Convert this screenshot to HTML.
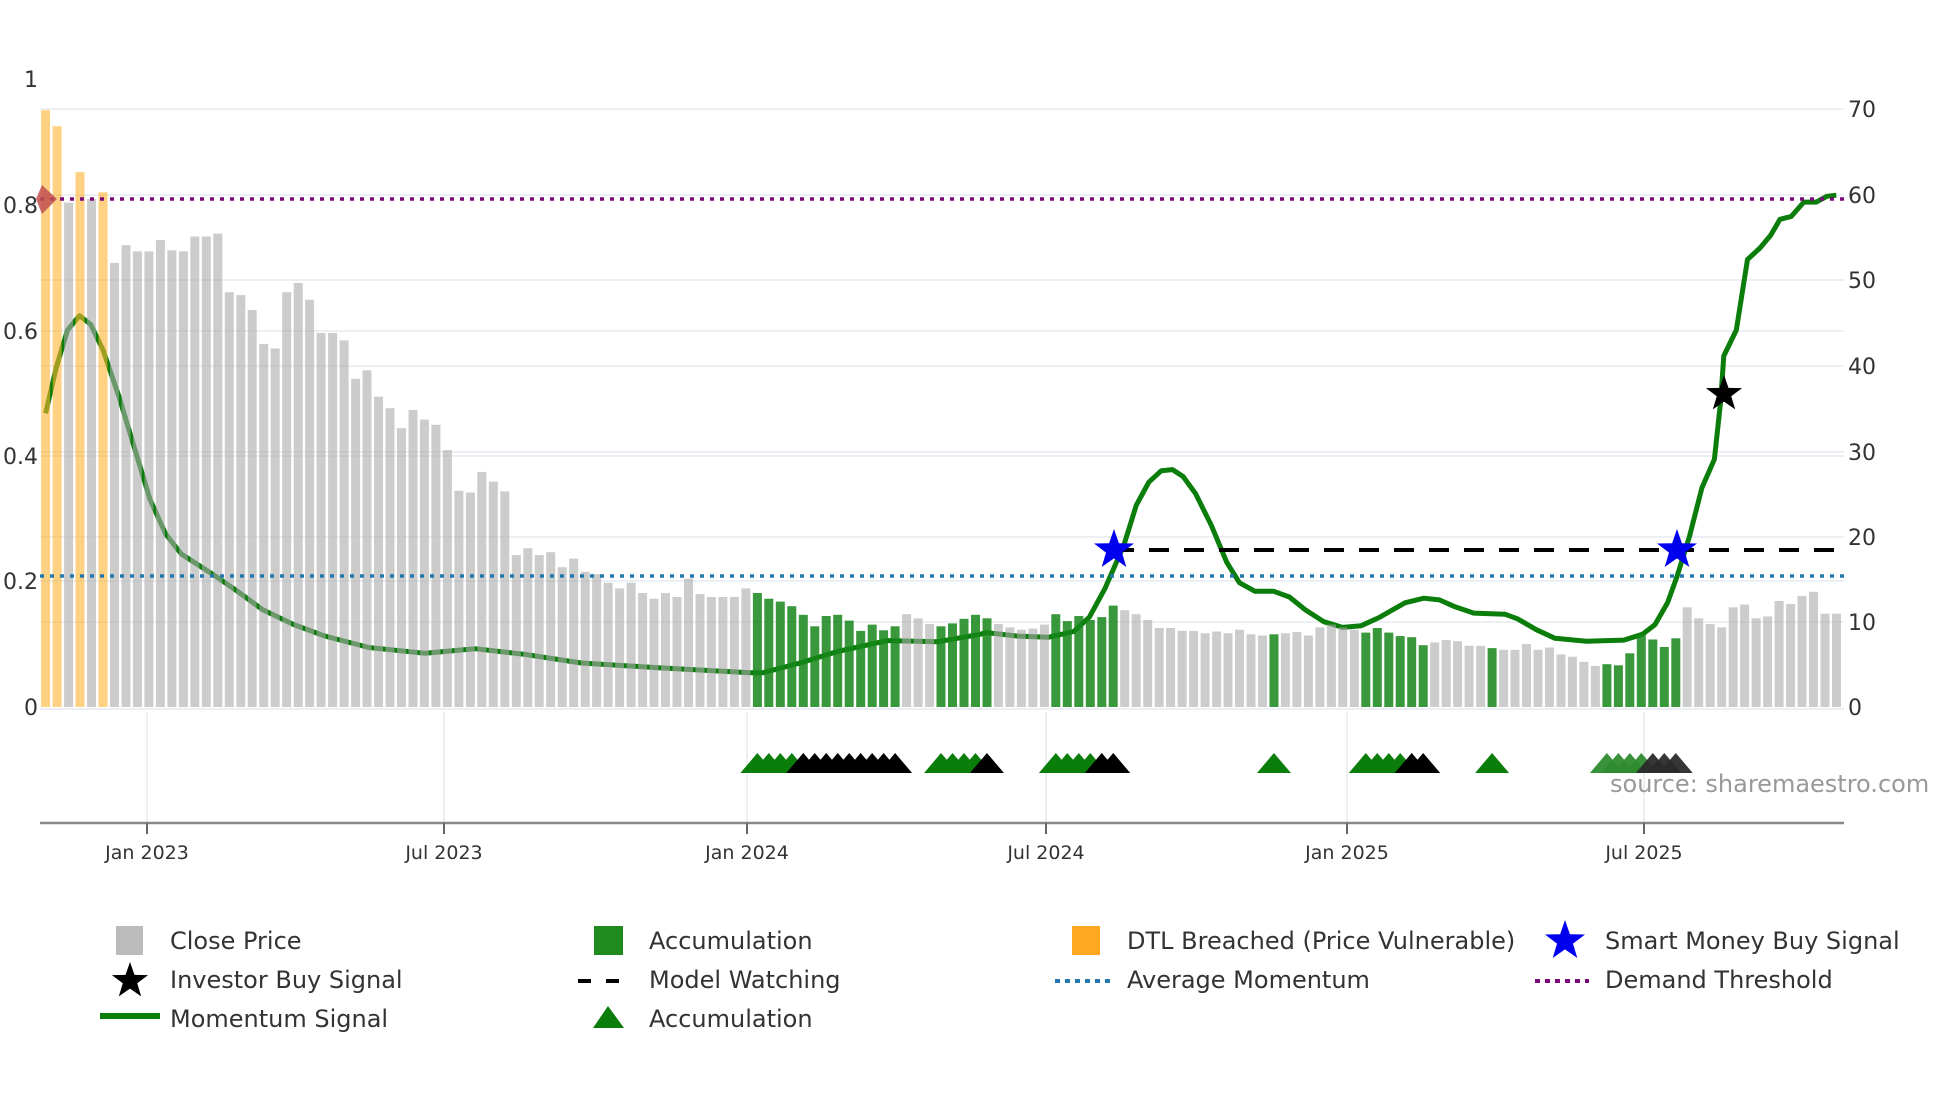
<!DOCTYPE html>
<html><head><meta charset="utf-8">
<style>
html,body{margin:0;padding:0;background:#fff;width:1960px;height:1102px;overflow:hidden}
svg{display:block}
text{font-family:"DejaVu Sans","Liberation Sans",sans-serif;fill:#333}
</style></head>
<body>
<svg id="s" width="1960" height="1102" viewBox="0 0 1960 1102" xmlns="http://www.w3.org/2000/svg">
<g id="grid" stroke="#eceff3" stroke-width="2">
<line x1="40" x2="1844" y1="109" y2="109"/>
<line x1="40" x2="1844" y1="195" y2="195"/>
<line x1="40" x2="1844" y1="280" y2="280"/>
<line x1="40" x2="1844" y1="331" y2="331"/>
<line x1="40" x2="1844" y1="366" y2="366"/>
<line x1="40" x2="1844" y1="452" y2="452"/>
<line x1="40" x2="1844" y1="456" y2="456"/>
<line x1="40" x2="1844" y1="537" y2="537"/>
<line x1="40" x2="1844" y1="581" y2="581"/>
<line x1="40" x2="1844" y1="622" y2="622"/>
<line x1="40" x2="1844" y1="709" y2="709"/>
<line x1="147" x2="147" y1="712" y2="823"/>
<line x1="444" x2="444" y1="712" y2="823"/>
<line x1="747" x2="747" y1="712" y2="823"/>
<line x1="1046" x2="1046" y1="712" y2="823"/>
<line x1="1347" x2="1347" y1="712" y2="823"/>
<line x1="1644" x2="1644" y1="712" y2="823"/>
</g>
<polyline id="mom" fill="none" stroke="#0a7d0a" stroke-width="5" stroke-linejoin="round"/>
<g id="bars"></g>
<line x1="40" x2="1844" y1="199" y2="199" stroke="#7a0a7a" stroke-width="3.5" stroke-dasharray="4,6"/>
<line x1="40" x2="1844" y1="576" y2="576" stroke="#2577b0" stroke-width="3.5" stroke-dasharray="4,6"/>
<line x1="1114" x2="1840" y1="550" y2="550" stroke="#000" stroke-width="4" stroke-dasharray="20,15"/>
<polygon points="42,185 57,199 42,214 36,199" fill="#c0504d" opacity="0.85"/>
<g id="tris"></g>
<g id="stars"></g>
<line x1="40" x2="1844" y1="823" y2="823" stroke="#888" stroke-width="2.5"/>
<g stroke="#666" stroke-width="2">
<line x1="147" x2="147" y1="823" y2="834"/><line x1="444" x2="444" y1="823" y2="834"/>
<line x1="747" x2="747" y1="823" y2="834"/><line x1="1046" x2="1046" y1="823" y2="834"/>
<line x1="1347" x2="1347" y1="823" y2="834"/><line x1="1644" x2="1644" y1="823" y2="834"/>
</g>
<g font-size="19" text-anchor="middle">
<text x="147" y="859">Jan 2023</text><text x="444" y="859">Jul 2023</text>
<text x="747" y="859">Jan 2024</text><text x="1046" y="859">Jul 2024</text>
<text x="1347" y="859">Jan 2025</text><text x="1644" y="859">Jul 2025</text>
</g>
<g font-size="22" text-anchor="end">
<text x="38" y="87">1</text><text x="38" y="213">0.8</text><text x="38" y="339">0.6</text>
<text x="38" y="464">0.4</text><text x="38" y="589">0.2</text><text x="38" y="715">0</text>
</g>
<g font-size="22">
<text x="1848" y="117">70</text><text x="1848" y="203">60</text><text x="1848" y="288">50</text>
<text x="1848" y="374">40</text><text x="1848" y="460">30</text><text x="1848" y="545">20</text>
<text x="1848" y="630">10</text><text x="1848" y="715">0</text>
</g>
<text x="1610" y="792" font-size="24" style="fill:#999">source: sharemaestro.com</text>
<!-- legend -->
<g font-size="24">
<rect x="116" y="926" width="27" height="29" fill="#bbb"/>
<text x="170" y="949">Close Price</text>
<text x="170" y="988">Investor Buy Signal</text>
<line x1="100" x2="160" y1="1016" y2="1016" stroke="#0a7d0a" stroke-width="6"/>
<text x="170" y="1027">Momentum Signal</text>
<rect x="594" y="926" width="29" height="29" fill="#1f8b1f"/>
<text x="649" y="949">Accumulation</text>
<line x1="578" x2="632" y1="981" y2="981" stroke="#000" stroke-width="4" stroke-dasharray="13,15"/>
<text x="649" y="988">Model Watching</text>
<polygon points="593,1028 608,1006 624,1028" fill="#0a7d0a"/>
<text x="649" y="1027">Accumulation</text>
<rect x="1072" y="926" width="28" height="29" fill="#ffa81f"/>
<text x="1127" y="949">DTL Breached (Price Vulnerable)</text>
<line x1="1055" x2="1110" y1="981" y2="981" stroke="#2577b0" stroke-width="4" stroke-dasharray="5,5"/>
<text x="1127" y="988">Average Momentum</text>
<line x1="1535" x2="1589" y1="981" y2="981" stroke="#7a0a7a" stroke-width="4" stroke-dasharray="5,5"/>
<text x="1605" y="949">Smart Money Buy Signal</text>
<text x="1605" y="988">Demand Threshold</text>
</g>
<g id="lstars"></g>
</svg>
<script>
var NS="http://www.w3.org/2000/svg";
function el(t,a,p){var e=document.createElementNS(NS,t);for(var k in a)e.setAttribute(k,a[k]);document.getElementById(p).appendChild(e);return e;}
var top1=[192,220,353,300,347,335,458,427,438,438,418,436,438,412,412,407,509,514,540,599,607,509,493,522,580,580,593,660,645,691,711,746,714,731,740,784,855,858,822,839,856,967,955,967,962,988,973,996,1000,1015,1025,1015,1033,1043,1033,1040,1008,1035,1040,1040,1040,1025,
1033,1043,1048,1056,1071,1091,1073,1071,1081,1099,1088,1098,1091,1070,1077,1087,1091,1086,1078,1071,
1077,1087,1093,1097,1095,1088,1070,1082,1073,1080,1075,1055,
1063,1070,1080,1094,1094,1099,1099,1103,1100,1103,1097,1105,1107,1105,
1103,1101,1107,1093,1088,1093,1097,1102,1094,1102,1108,1110,1124,
1119,1115,1117,1125,1125,1129,1132,1132,1122,1132,1128,1140,1144,1153,1160,
1157,1159,1138,1105,1114,1127,1112,
1058,1077,1087,1093,1058,1053,1077,1074,1047,1052,1038,1031,1069,1069];
var green=[];function rg(a,b){for(var i=a;i<=b;i++)green[i]=1;}
rg(62,74);rg(78,82);rg(88,93);green[107]=1;rg(115,120);green[126]=1;rg(136,142);
var orange={0:1,1:1,3:1,5:1};
for(var i=0;i<157;i++){var cx=45.6+i*11.48;var t=top1[i]/1.742;
 var c,op;
 if(orange[i]){c="#ffb22e";op=0.6;}else if(green[i]){c="#16861a";op=0.85;}else{c="#aaaaaa";op=0.6;}
 el("rect",{x:(cx-4.5).toFixed(1),y:t.toFixed(1),width:9,height:(707-t).toFixed(1),fill:c,opacity:op},"bars");}
var p1=[[73,720],[90,640],[108,575],[127,550],[145,565],[165,610],[190,690],[215,780],[240,870],[265,930],[290,965],[340,1000],[380,1030],[420,1062],[470,1088],[520,1108],[590,1128],[680,1138],[760,1130],[840,1140],[930,1155],[1050,1163],[1200,1172],[1220,1172],[1280,1155],[1340,1135],[1420,1116],[1500,1118],[1568,1105]];
var p2=[[10,1102],[60,1108],[110,1110],[150,1100],[175,1075],[200,1025],[230,950],[250,880],[270,840],[290,820],[308,818],[325,830],[345,860],[370,915],[395,980],[415,1015],[440,1030],[470,1030],[495,1040],[520,1062],[550,1083],[580,1093],[610,1090],[640,1075],[680,1050],[710,1042],[735,1045],[760,1057],[790,1068],[840,1070],[860,1078],[890,1097],[920,1112],[970,1117],[1030,1115],[1060,1105],[1080,1088],[1100,1050],[1115,1005],[1135,935],[1155,850],[1175,800],[1185,700],[1190,620],[1210,575],[1228,452],[1248,432],[1265,410],[1280,382],[1298,377],[1318,352],[1338,352],[1355,342],[1370,340]];
var pts=[];p1.forEach(function(p){pts.push((p[0]/1.6).toFixed(1)+","+(p[1]/1.742).toFixed(1));});
p2.forEach(function(p){pts.push((980+p[0]/1.6).toFixed(1)+","+(p[1]/1.742).toFixed(1));});
document.getElementById("mom").setAttribute("points",pts.join(" "));
function tri(i,c,op){var cx=45.6+i*11.48;el("polygon",{points:(cx-17)+",773 "+cx+",753 "+(cx+17)+",773",fill:c,opacity:op||1},"tris");}
var G="#0a7d0a",K="#000";
for(i=62;i<=65;i++)tri(i,G);for(i=66;i<=74;i++)tri(i,K);
for(i=78;i<=81;i++)tri(i,G);tri(82,K);
for(i=88;i<=91;i++)tri(i,G);for(i=92;i<=93;i++)tri(i,K);
tri(107,G);for(i=115;i<=118;i++)tri(i,G);for(i=119;i<=120;i++)tri(i,K);tri(126,G);
for(i=136;i<=139;i++)tri(i,"#2e8b2e",0.95);for(i=140;i<=142;i++)tri(i,"#2b2b2b",0.95);
function star(cx,cy,R,c,p){var r=R*0.4,s=[];for(var k=0;k<10;k++){var a=-Math.PI/2+k*Math.PI/5;var rr=k%2?r:R;s.push((cx+rr*Math.cos(a)).toFixed(1)+","+(cy+rr*Math.sin(a)).toFixed(1));}
 el("polygon",{points:s.join(" "),fill:c},p);}
star(1114,550,21,"#0000ee","stars");star(1677,550,21,"#0000ee","stars");star(1724,394,19,"#000","stars");
star(130,981,19,"#000","lstars");star(1565,941,21,"#0000ee","lstars");
</script>
</body></html>
